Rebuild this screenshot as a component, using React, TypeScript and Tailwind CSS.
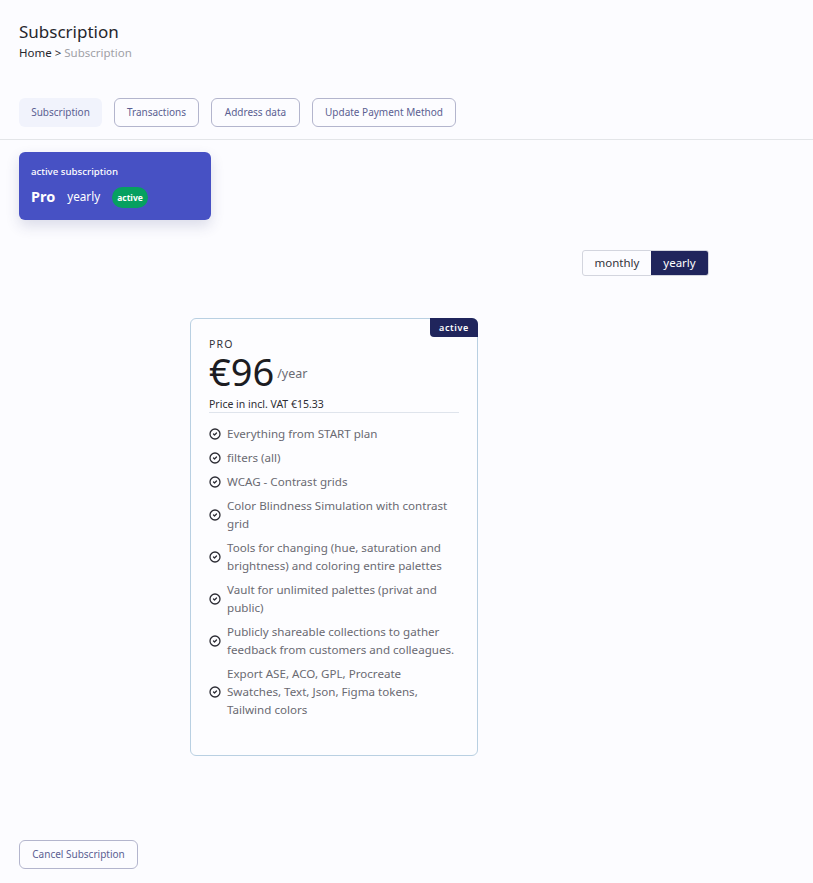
import { CircleCheck } from "lucide-react";

const TABS = [
  { label: "Transactions", width: "w-[85px]" },
  { label: "Address data", width: "w-[89px]" },
  { label: "Update Payment Method", width: "w-[144px]" },
];

const FEATURES = [
  "Everything from START plan",
  "filters (all)",
  "WCAG - Contrast grids",
  "Color Blindness Simulation with contrast grid",
  "Tools for changing (hue, saturation and brightness) and coloring entire palettes",
  "Vault for unlimited palettes (privat and public)",
  "Publicly shareable collections to gather feedback from customers and colleagues.",
  "Export ASE, ACO, GPL, Procreate Swatches, Text, Json, Figma tokens, Tailwind colors",
];

function PriceCard() {
  return (
    <div className="relative w-[288px] h-[438px] rounded-md border border-[#b9d0e2] bg-[#fdfdff] px-[18px] pt-[19px]">
      <span className="absolute -top-px -right-px h-[19px] w-[48px] rounded-tr-md rounded-bl-[4px] bg-[#20255c] text-center text-[9px] leading-[19px] font-semibold tracking-[0.6px] text-white">
        active
      </span>
      <div className="text-[10.5px] leading-[13px] tracking-[1.2px] text-[#33333b]">PRO</div>
      <div className="flex items-end h-[40px]">
        <span className="text-[38px] leading-[40px] text-[#1c1c22]">€96</span>
        <span className="ml-[3px] mb-[7px] text-[12.5px] leading-5 text-[#6b6b73]">/year</span>
      </div>
      <div className="mt-[5px] border-b border-[#dfe4ec] text-[10.5px] leading-[16px] text-[#2d2d33]">
        Price in incl. VAT €15.33
      </div>
      <ul className="mt-[12px] flex flex-col gap-1.5">
        {FEATURES.map((f) => (
          <li key={f} className="flex items-center gap-[6px] text-[11.6px] leading-[18px] text-[#6a6a72]">
            <CircleCheck size={12} strokeWidth={2.6} className="shrink-0 text-[#2c2c34]" />
            <span className="max-w-[229px]">{f}</span>
          </li>
        ))}
      </ul>
    </div>
  );
}

export default function App() {
  return (
    <div className="h-[883px] w-[813px] overflow-hidden bg-[#fcfcff] pt-[21px] font-['Noto_Sans',sans-serif]">
      <div className="pl-[19px]">
        <h1 className="text-[17px] leading-[22px] text-[#26262c]">Subscription</h1>
        <div className="mt-[1px] text-[11.5px] leading-[18px] text-[#26262c]">
          Home &gt; <span className="text-[#a0a0a6]">Subscription</span>
        </div>
      </div>

      <div className="mt-[36px] flex gap-3 border-b border-[#e3e5e8] pb-3 pl-[19px]">
        <button className="h-[29px] w-[83px] rounded-md bg-[#f1f3fc] text-[10px] text-[#5b5f92]">Subscription</button>
        {TABS.map((t) => (
          <button key={t.label} className={`h-[29px] rounded-md border border-[#b3b5cd] text-[10px] text-[#5b5f92] ${t.width}`}>
            {t.label}
          </button>
        ))}
      </div>

      <div className="ml-[19px] mt-3 h-[68px] w-[192px] rounded-md bg-[#4751c4] px-3 pt-[12px] text-white shadow-[0_6px_14px_rgba(50,55,120,0.16)]">
        <div className="text-[9.7px] leading-[16px] font-medium">active subscription</div>
        <div className="mt-[5px] flex items-center">
          <span className="text-[14.5px] leading-[21px] font-bold">Pro</span>
          <span className="ml-3 text-[11.7px] leading-[21px]">yearly</span>
          <span className="ml-3 mt-[2px] h-[21px] rounded-full bg-[#06a060] px-[5px] text-[8.5px] leading-[21px] font-bold">active</span>
        </div>
      </div>

      <div className="mr-[104px] mt-[30px] flex justify-end">
        <div className="flex h-[26px] overflow-hidden rounded-[3px] border border-[#d3d5de] text-[11.5px] leading-[23px]">
          <span className="w-[68px] text-center text-[#33333b]">monthly</span>
          <span className="w-[57px] bg-[#20255c] text-center text-white">yearly</span>
        </div>
      </div>

      <div className="ml-[190px] mt-[42px]">
        <PriceCard />
      </div>

      <div className="ml-[19px] mt-[84px]">
        <button className="h-[29px] w-[119px] rounded-md border border-[#b3b5cd] text-[10px] text-[#5b5f92]">
          Cancel Subscription
        </button>
      </div>
    </div>
  );
}
